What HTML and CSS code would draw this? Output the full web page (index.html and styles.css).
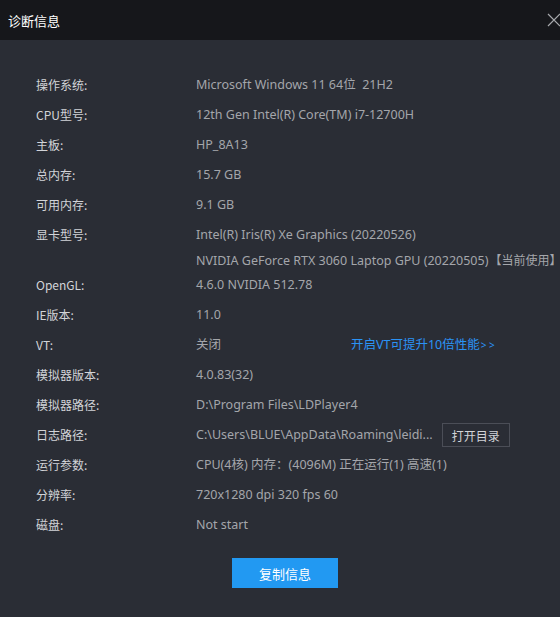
FILE: index.html
```html
<!DOCTYPE html>
<html lang="zh-CN">
<head>
<meta charset="utf-8">
<title>诊断信息</title>
<link rel="stylesheet" href="styles.css">
</head>
<body>
<div class="dialog">
  <header class="titlebar">
    <span class="title">诊断信息</span>
    <svg class="close" width="14" height="14" viewBox="0 0 14 14">
      <path d="M1 1 L13 13 M13 1 L1 13" stroke="#a7a9ad" stroke-width="1.2" fill="none"/>
    </svg>
  </header>
  <main class="body">
    <dl class="info">
      <dt>操作系统:</dt><dd>Microsoft Windows 11 64位&nbsp;&nbsp;21H2</dd>
      <dt>CPU型号:</dt><dd>12th Gen Intel(R) Core(TM) i7-12700H</dd>
      <dt>主板:</dt><dd>HP_8A13</dd>
      <dt>总内存:</dt><dd>15.7 GB</dd>
      <dt>可用内存:</dt><dd>9.1 GB</dd>
      <dt class="tall">显卡型号:</dt>
      <dd class="tall">
        <span class="line">Intel(R) Iris(R) Xe Graphics (20220526)</span>
        <span class="line second">NVIDIA GeForce RTX 3060 Laptop GPU (20220505)<span class="tag">【当前使用】</span></span>
      </dd>
      <dt>OpenGL:</dt><dd>4.6.0 NVIDIA 512.78</dd>
      <dt>IE版本:</dt><dd>11.0</dd>
      <dt>VT:</dt><dd class="split"><span class="vt-state">关闭</span><a class="vt-link" href="#">开启VT可提升10倍性能<span class="arrows">&gt; &gt;</span></a></dd>
      <dt>模拟器版本:</dt><dd>4.0.83(32)</dd>
      <dt>模拟器路径:</dt><dd>D:\Program Files\LDPlayer4</dd>
      <dt>日志路径:</dt><dd class="split"><span class="path">C:\Users\BLUE\AppData\Roaming\leidi...</span><button class="ghost">打开目录</button></dd>
      <dt>运行参数:</dt><dd>CPU(4核) 内存：(4096M) 正在运行(1) 高速(1)</dd>
      <dt>分辨率:</dt><dd>720x1280 dpi 320 fps 60</dd>
      <dt>磁盘:</dt><dd>Not start</dd>
    </dl>
    <div class="actions">
      <button class="primary">复制信息</button>
    </div>
  </main>
</div>
</body>
</html>
```

FILE: styles.css
```css
html, body {
  margin: 0;
  padding: 0;
  background: #2a2d35;
  overflow: hidden;
}

body {
  font-family: "Noto Sans", "Noto Sans CJK SC", sans-serif;
  font-size: 12.5px;
}

.dialog {
  width: 560px;
  height: 617px;
  background: #2a2d35;
}

.titlebar {
  height: 40px;
  background: #16171b;
  display: flex;
  align-items: center;
  padding-left: 8px;
}

.title {
  color: #ffffff;
  font-size: 13px;
  font-family: "Noto Sans CJK SC", sans-serif;
}

.close {
  margin-left: auto;
  margin-right: -1px;
}

.body {
  padding: 30px 0 0 36px;
}

.info {
  display: grid;
  grid-template-columns: 160px 1fr;
  margin: 0;
}

.info dt,
.info dd {
  margin: 0;
  height: 30px;
  line-height: 30px;
  white-space: nowrap;
}

.info dt {
  color: #d2d4d8;
  font-family: "Noto Sans CJK SC", sans-serif;
  font-size: 12px;
}

.info dd {
  color: #a4a6ab;
}

.info .tall {
  height: 50px;
}

.info .line {
  display: block;
  height: 30px;
  line-height: 30px;
}

.info .line.second {
  height: 20px;
  line-height: 20px;
}

.tag {
  font-family: "Noto Sans CJK SC", sans-serif;
  font-size: 12px;
  margin-left: 1px;
}

.split {
  display: flex;
  align-items: center;
}

.vt-state {
  width: 155px;
}

.vt-link {
  color: #2b93f5;
  text-decoration: none;
}

.arrows {
  font-size: 10px;
  margin-left: 1px;
}

.path {
  margin-right: 9px;
}

.ghost {
  height: 24px;
  width: 68px;
  padding: 0;
  background: transparent;
  border: 1px solid #4b4e57;
  color: #d2d4d8;
  font-family: "Noto Sans CJK SC", sans-serif;
  font-size: 12px;
}

.actions {
  padding: 18px 0 0 196px;
}

.primary {
  width: 106px;
  height: 30px;
  padding: 0;
  border: 0;
  background: #2299f2;
  color: #ffffff;
  font-family: "Noto Sans CJK SC", sans-serif;
  font-size: 13px;
}
```
